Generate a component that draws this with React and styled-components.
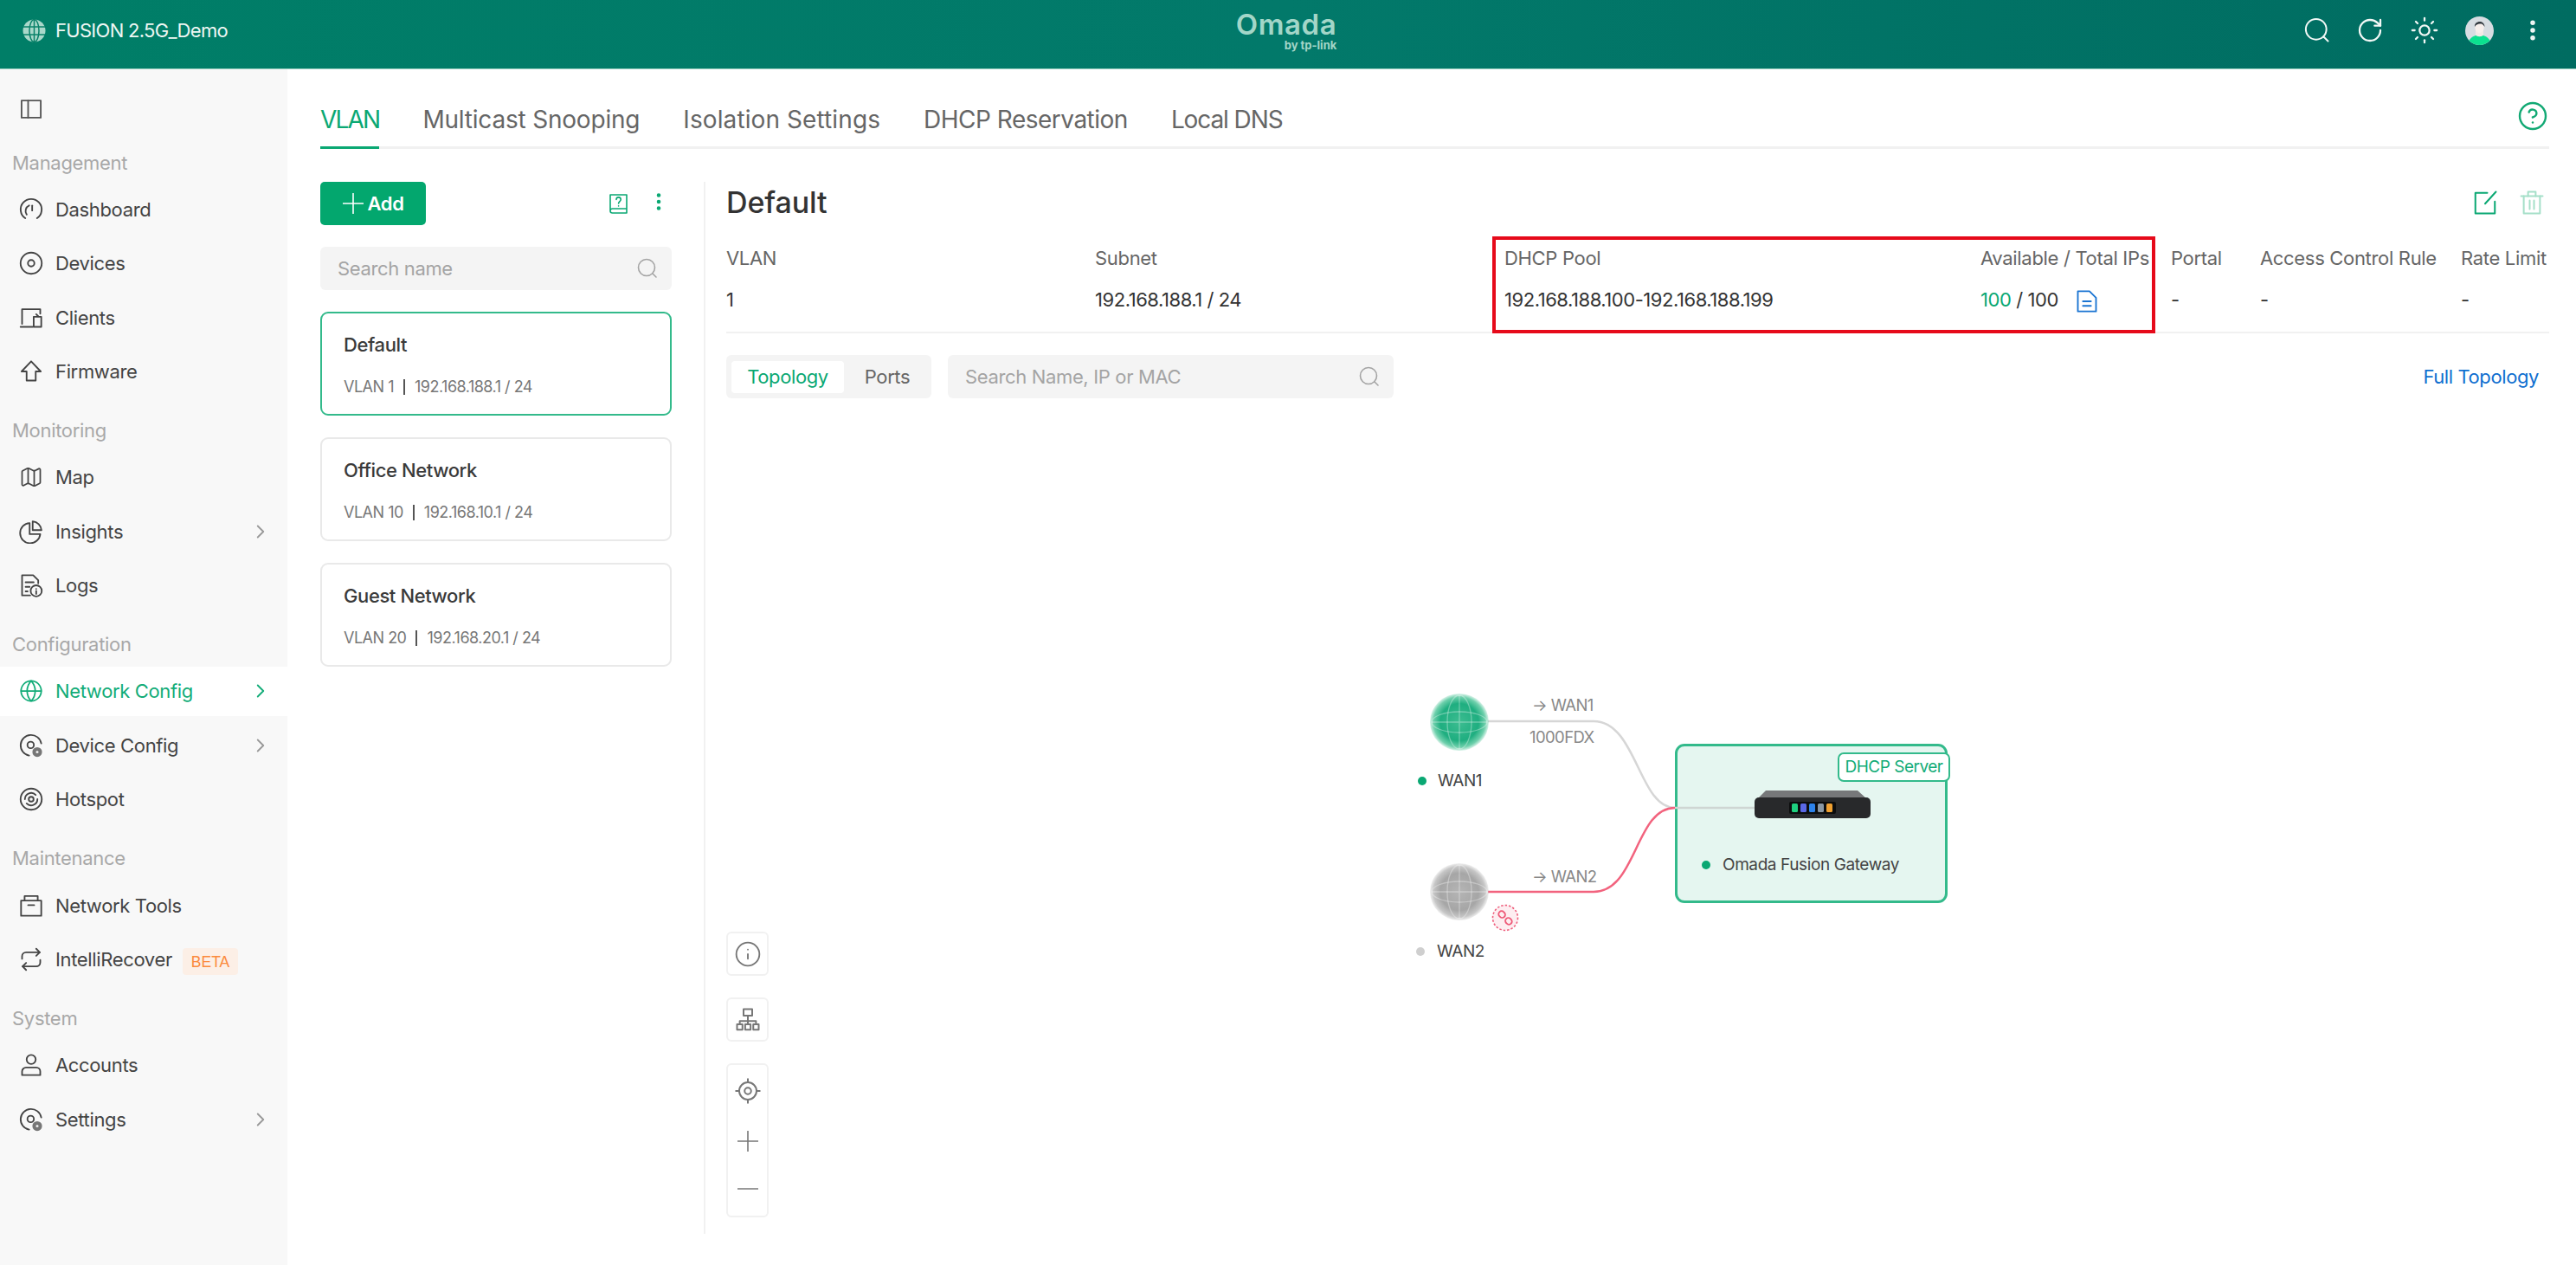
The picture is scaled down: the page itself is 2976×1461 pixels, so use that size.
import React from 'react';
import styled, { createGlobalStyle } from 'styled-components';
import { ChevronRight, Map as MapIcon, Info, Globe, RotateCw, Sun, CircleHelp, EllipsisVertical } from 'lucide-react';

const GlobalStyle = createGlobalStyle`
	html, body {
		margin: 0;
		padding: 0;
		background: #fff;
		font-family: Inter, "Noto Sans", "Liberation Sans", sans-serif;
		color: #333;
		overflow: hidden;
	}
	* { box-sizing: border-box; }
`;

const Page = styled.div`
	display: flex;
	flex-direction: column;
	width: 2976px;
	height: 1461px;
`;

/* top bar */
const Header = styled.header`
	display: grid;
	grid-template-columns: 1fr auto 1fr;
	align-items: center;
	height: 80px;
	flex: none;
	padding: 0 35px 9px 26px;
	border-bottom: 1px solid #8cc8b8;
	background: linear-gradient(90deg, #007e67, #02796a 50%, #006c61);
`;

const SiteName = styled.div`
	display: flex;
	align-items: center;
	gap: 11px;
	font-size: 22px;
	letter-spacing: -0.7px;
	color: #eef7f4;
`;

const Logo = styled.div`
	display: flex;
	flex-direction: column;
	align-items: flex-end;
	margin-left: 5px;
	color: #a3d6c8;
`;

const LogoName = styled.span`
	font-size: 33px;
	line-height: 33px;
	font-weight: 600;
	letter-spacing: 0.6px;
`;

const LogoBy = styled.span`
	font-size: 13px;
	line-height: 14px;
	font-weight: 700;
`;

const HeaderTools = styled.div`
	display: flex;
	align-items: center;
	justify-content: flex-end;
	gap: 30px;
	color: #f2f8f6;
`;

const Body = styled.div`
	display: flex;
	flex: 1;
	min-height: 0;
`;

/* sidebar */
const Sidebar = styled.nav`
	width: 332px;
	flex: none;
	background: #f8f8f8;
	display: flex;
	flex-direction: column;
	gap: 19.5px;
`;

const CollapseRow = styled.div`
	display: flex;
	align-items: center;
	height: 62px;
	margin-top: 15px;
	margin-bottom: -9px;
	padding-left: 22px;
	color: #555;
`;

const Section = styled.section`
	display: flex;
	flex-direction: column;
	gap: 5.3px;
`;

const SectionLabel = styled.div`
	height: 40px;
	margin-bottom: 0.7px;
	padding-left: 14px;
	line-height: 40px;
	font-size: 22px;
	letter-spacing: -0.3px;
	color: #a8a8a8;
`;

const NavItem = styled.div`
	display: flex;
	align-items: center;
	gap: 14px;
	height: 57px;
	padding-left: 22px;
	padding-right: 18px;
	font-size: 22px;
	letter-spacing: -0.35px;
	background: ${(props) => (props.$active ? '#fff' : 'transparent')};
	color: ${(props) => (props.$active ? '#12ac78' : '#444')};
`;

const NavArrow = styled.span`
	display: flex;
	margin-left: auto;
	color: ${(props) => (props.$active ? '#12ac78' : '#999')};
`;

const BetaTag = styled.span`
	margin: 6px 0 0 -2px;
	padding: 0 10px;
	height: 31px;
	line-height: 32px;
	border-radius: 4px;
	background: #fcefe6;
	color: #fb8a3c;
	font-family: "Liberation Sans", sans-serif;
	font-size: 17.5px;
	letter-spacing: 0;
`;

const Glyph = styled.svg`
	display: block;
	flex: none;
	fill: none;
	stroke: currentColor;
	stroke-width: 1.6;
	stroke-linecap: round;
	stroke-linejoin: round;
`;

/* main column */
const Main = styled.main`
	flex: 1;
	min-width: 0;
	padding: 0 31px 36px 38px;
	display: flex;
	flex-direction: column;
`;

const TabBar = styled.div`
	display: flex;
	align-items: flex-end;
	gap: 50px;
	height: 92px;
	flex: none;
	border-bottom: 3px solid #f1f1f1;
	color: #12a974;
`;

const Tab = styled.div`
	height: 51px;
	margin-bottom: -3px;
	padding-bottom: 14px;
	line-height: 34px;
	font-size: 28px;
	letter-spacing: ${(props) => props.$spacing}px;
	border-bottom: 3px solid ${(props) => (props.$active ? '#0aa873' : 'transparent')};
	color: ${(props) => (props.$active ? '#0aa873' : '#666')};
`;

const TabHelp = styled.div`
	margin: 0 1px 13px auto;
`;

const Columns = styled.div`
	display: flex;
	flex: 1;
	min-height: 0;
	margin-top: 38px;
`;

const VlanList = styled.aside`
	width: 406px;
	flex: none;
	display: flex;
	flex-direction: column;
`;

const ListTools = styled.div`
	display: flex;
	align-items: center;
	height: 50px;
	margin-bottom: 25px;
	color: #0aa873;
`;

const AddButton = styled.div`
	display: flex;
	align-items: center;
	justify-content: center;
	gap: 5px;
	width: 122px;
	height: 50px;
	border-radius: 5px;
	background: #03a76e;
	color: #fff;
	font-size: 22px;
	font-weight: 600;
	letter-spacing: -0.4px;
`;

const HelpBook = styled.div`
	margin-left: auto;
	margin-right: 21px;
`;

const DotsButton = styled.div`
	margin-right: 2px;
`;

const SearchBox = styled.div`
	display: flex;
	align-items: center;
	justify-content: space-between;
	width: ${(props) => props.$width || 'auto'};
	height: 50px;
	padding: 0 16px 0 20px;
	border-radius: 6px;
	background: #f4f4f4;
	color: #a4a4a4;
	font-size: 22px;
	letter-spacing: -0.35px;
`;

const VlanCard = styled.div`
	height: 120px;
	margin-top: 25px;
	padding: 21px 25px 0 25px;
	border-radius: 9px;
	border: 2px solid ${(props) => (props.$active ? '#33ba8b' : '#e9e9e9')};
	background: #fff;
`;

const CardName = styled.div`
	line-height: 30px;
	font-size: 22px;
	font-weight: 550;
	letter-spacing: -0.4px;
	color: #3a3a3a;
`;

const CardMeta = styled.div`
	display: flex;
	align-items: center;
	gap: 11px;
	margin-top: 19px;
	line-height: 30px;
	font-size: 18px;
	letter-spacing: -0.5px;
	color: #777;
`;

const MetaBar = styled.span`
	width: 2px;
	height: 18px;
	background: #555;
`;

const Detail = styled.section`
	flex: 1;
	min-width: 0;
	margin-left: 37px;
	padding-left: 24px;
	border-left: 2px solid #f1f1f1;
	display: flex;
	flex-direction: column;
`;

const TitleRow = styled.div`
	display: flex;
	align-items: center;
	justify-content: space-between;
	height: 48px;
	flex: none;
	margin-bottom: 15px;
`;

const Title = styled.h2`
	margin: 0;
	font-size: 34px;
	line-height: 48px;
	font-weight: 450;
	letter-spacing: -0.1px;
	color: #333;
`;

const TitleTools = styled.div`
	display: flex;
	gap: 24px;
	padding-right: 5px;
`;

const ToolIcon = styled.span`
	display: flex;
	color: ${(props) => (props.$muted ? '#a6e0c9' : '#0aa873')};
`;

/* pool table */
const InfoTable = styled.div`
	position: relative;
	display: grid;
	grid-template-columns: 426px 473px 550px 220px 103px 232px 102px;
	grid-template-rows: 50px 46px;
	height: 112px;
	flex: none;
	border-bottom: 2px solid #f1f1f1;
	align-items: center;
`;

const ColHead = styled.div`
	font-size: 22px;
	letter-spacing: -0.32px;
	color: #666;
	white-space: nowrap;
`;

const ColValue = styled.div`
	display: flex;
	align-items: center;
	font-size: 22px;
	letter-spacing: -0.45px;
	color: #333;
	white-space: nowrap;
`;

const Available = styled.span`
	color: #0aa873;
	margin-right: 6px;
`;

const PoolFile = styled.span`
	display: flex;
	margin-left: 19px;
	margin-top: 3px;
	color: #1a74d2;
`;

const Highlight = styled.div`
	position: absolute;
	left: 885px;
	top: 0;
	width: 766px;
	height: 112px;
	border: 4px solid #e60a1a;
	pointer-events: none;
`;

const ViewRow = styled.div`
	display: flex;
	align-items: center;
	height: 50px;
	flex: none;
	margin-top: 25px;
	gap: 19px;
`;

const Segment = styled.div`
	display: flex;
	align-items: center;
	width: 237px;
	height: 50px;
	padding-left: 6px;
	border-radius: 6px;
	background: #f4f4f4;
`;

const SegmentItem = styled.div`
	flex: none;
	width: ${(props) => (props.$active ? '130px' : '100px')};
	height: 37px;
	line-height: 37px;
	text-align: center;
	border-radius: 4px;
	font-size: 22px;
	letter-spacing: -0.4px;
	background: ${(props) => (props.$active ? '#fff' : 'transparent')};
	color: ${(props) => (props.$active ? '#0aa873' : '#666')};
`;

const FullLink = styled.div`
	margin-left: auto;
	padding-right: 12px;
	font-size: 22px;
	letter-spacing: -0.4px;
	color: #0f6fd0;
`;

/* topology canvas */
const Canvas = styled.div`
	position: relative;
	flex: 1;
	min-height: 0;
`;

const Wires = styled.svg`
	position: absolute;
	left: 0;
	top: 0;
	width: 100%;
	height: 100%;
	fill: none;
`;

const Node = styled.div`
	position: absolute;
	left: ${(props) => props.$x}px;
	top: ${(props) => props.$y}px;
`;

const NodeLabel = styled(Node)`
	display: flex;
	align-items: center;
	gap: ${(props) => props.$gap || 11}px;
	height: 26px;
	line-height: 26px;
	font-size: 19px;
	letter-spacing: -0.4px;
	white-space: nowrap;
	color: #444;
`;

const WireLabel = styled(Node)`
	height: 24px;
	line-height: 24px;
	font-size: 18.5px;
	letter-spacing: -0.6px;
	white-space: nowrap;
	color: #888;
`;

const StatusDot = styled.span`
	width: 10px;
	height: 10px;
	border-radius: 50%;
	background: ${(props) => (props.$on ? '#0aa873' : '#cfcfcf')};
`;

const GatewayBox = styled(Node)`
	width: 315px;
	height: 184px;
	border: 3px solid #33ba8b;
	border-radius: 11px;
	background: #e5f6f0;
`;

const ServerTag = styled(Node)`
	width: 130px;
	height: 34px;
	line-height: 29px;
	text-align: center;
	border: 2px solid #33ba8b;
	border-radius: 7px;
	background: #fff;
	color: #12ac78;
	font-size: 19px;
	letter-spacing: -0.5px;
	white-space: nowrap;
`;

const MapControls = styled.div`
	position: absolute;
	left: 0;
	bottom: 19px;
	display: flex;
	flex-direction: column;
	gap: 25px;
`;

const ControlBox = styled.div`
	display: flex;
	flex-direction: column;
	align-items: center;
	justify-content: ${(props) => (props.$tall ? 'space-between' : 'center')};
	width: 49px;
	padding: ${(props) => (props.$tall ? '15px 0 19px' : '0')};
	height: ${(props) => (props.$tall ? '178px' : '51px')};
	border: 2px solid #f1f1f1;
	border-radius: 6px;
	background: #fff;
	color: #777;
`;

const icons = {
	panel: (
		<>
			<rect x="2.5" y="3.5" width="19" height="17" />
			<path d="M9 3.5v17" />
		</>
	),
	dashboard: (
		<>
			<path d="M6.2 20.6A10.4 10.4 0 1 1 17.8 20.6" />
			<path d="M7.6 17a6 6 0 0 1 2.4-9" />
			<path d="M13 8v5" />
		</>
	),
	devices: (
		<>
			<circle cx="12" cy="12" r="10.5" />
			<circle cx="12" cy="12" r="3.2" />
		</>
	),
	clients: (
		<>
			<path d="M3 18V3.5h18V8" />
			<path d="M1.5 21h12" />
			<rect x="14.5" y="11" width="7.5" height="10" />
			<path d="M17 8.5l2 2" />
		</>
	),
	firmware: <path d="M12 2l9.5 10H16.5v9h-9v-9H2.5z" />,
	insights: (
		<>
			<path d="M10.5 3.5A10 10 0 1 0 21 14.5H10.5z" />
			<path d="M13.5 1.8A9.5 9.5 0 0 1 22.2 10.5H13.5z" />
		</>
	),
	logs: (
		<>
			<path d="M11 22H3V2h11l5 5v3" />
			<path d="M6.5 9h8M6.5 13.5h4M6.5 18h2" />
			<circle cx="17" cy="17.5" r="5.5" />
			<path d="M17 15.5v0M17 17.5v3" />
		</>
	),
	gear: (
		<>
			<path d="M10 22A10.3 10.3 0 1 1 22 10" />
			<circle cx="11.5" cy="11.5" r="3.2" />
			<circle cx="18" cy="18.5" r="4" fill="#777" stroke="#777" />
			<circle cx="18" cy="18.5" r="1.3" fill="#eee" stroke="none" />
		</>
	),
	hotspot: (
		<>
			<circle cx="12" cy="12" r="10.5" />
			<path d="M5.8 12A6.2 6.2 0 0 1 16.5 7.8" />
			<path d="M18.2 12A6.2 6.2 0 0 1 7.5 16.2" />
			<circle cx="12" cy="12" r="2.4" />
		</>
	),
	tools: (
		<>
			<rect x="2" y="7" width="20" height="15" />
			<path d="M5.5 7V2.5h13V7" />
			<path d="M9 11.5h6" />
		</>
	),
	repeat: (
		<>
			<path d="M17 1.5l3.5 3.5L17 8.5" />
			<path d="M3 11.5V9a4 4 0 0 1 4-4h13.5" />
			<path d="M7 22.5L3.5 19 7 15.5" />
			<path d="M21 12.5V15a4 4 0 0 1-4 4H3.5" />
		</>
	),
	account: (
		<>
			<circle cx="12" cy="6.5" r="4.5" />
			<path d="M3 22v-3.5a4 4 0 0 1 4-4h10a4 4 0 0 1 4 4V22z" />
		</>
	),
	search: (
		<>
			<circle cx="11" cy="11" r="9.5" />
			<path d="M18 18l4 4" />
		</>
	),
	book: (
		<>
			<path d="M2 20V2h19v21H4.5A2.5 2.5 0 0 1 2 20.5 2.5 2.5 0 0 1 4.5 18H21" />
			<path d="M9 7.5A2.6 2.6 0 0 1 14.2 7.5c0 2-2.6 2.2-2.6 4.5" />
			<path d="M11.6 14.8v.2" />
		</>
	),
	edit: (
		<>
			<path d="M14 3H3v19h18V11" />
			<path d="M12 13L22 2" />
		</>
	),
	trash: (
		<>
			<path d="M2 6h20" />
			<path d="M8.5 6V2h7v4" />
			<path d="M4.5 6v16h15V6" />
			<path d="M10 10v8M14 10v8" />
		</>
	),
	file: (
		<>
			<path d="M3 2h11.5L21 8.5V22H3z" />
			<path d="M8 12h8M8 16.5h8" />
		</>
	),
	tree: (
		<>
			<rect x="8" y="2" width="8" height="6" />
			<path d="M12 8v5M4.5 16v-3h15v3M12 13v3" />
			<rect x="2" y="16" width="5" height="5" />
			<rect x="9.5" y="16" width="5" height="5" />
			<rect x="17" y="16" width="5" height="5" />
		</>
	),
	target: (
		<>
			<circle cx="12" cy="12" r="8" />
			<circle cx="12" cy="12" r="3" />
			<path d="M12 1v3M12 20v3M1 12h3M20 12h3" />
		</>
	),
	plus: <path d="M12 0.5v23M0.5 12h23" />,
	minus: <path d="M0.5 12h23" />,
};

const Icon = ({ name, size = 28, weight }) => (
	<Glyph width={size} height={size} viewBox="0 0 24 24" style={weight ? { strokeWidth: weight } : undefined}>
		{icons[name]}
	</Glyph>
);

const SiteGlobe = () => (
	<svg width="27" height="27" viewBox="0 0 27 27" fill="none">
		<circle cx="13.5" cy="13.5" r="13" fill="#a9d8ca" />
		<g stroke="#0a8169" strokeWidth="1.5">
			<ellipse cx="13.5" cy="13.5" rx="5.5" ry="13" />
			<path d="M13.5 0.5v26M1 9h25M1 18h25" />
		</g>
	</svg>
);

const Avatar = () => (
	<svg width="33" height="33" viewBox="0 0 33 33">
		<defs>
			<clipPath id="avatarClip">
				<circle cx="16.5" cy="16.5" r="16.5" />
			</clipPath>
		</defs>
		<g clipPath="url(#avatarClip)">
			<rect width="33" height="33" fill="#d7dde2" />
			<path d="M3 33c1-8 6-10 9-11h9c3 1 8 3 9 11z" fill="#0be08f" />
			<path d="M12 21c1 3 8 3 9 0v-6h-9z" fill="#f3e9e6" />
			<ellipse cx="16.5" cy="12.5" rx="5.2" ry="6.5" fill="#f7efec" />
			<path d="M11 12c-1-7 11-9 11.5 0-2-3-3-3.5-5.5-3.5S12 10 11 12z" fill="#333a40" />
		</g>
	</svg>
);

const NetworkGlobe = ({ id, stops }) => (
	<svg width="70" height="66" viewBox="0 0 70 66">
		<defs>
			<radialGradient id={id} cx="50%" cy="50%" r="50%">
				<stop offset="0%" stopColor={stops[0]} />
				<stop offset="65%" stopColor={stops[1]} />
				<stop offset="88%" stopColor={stops[2]} />
				<stop offset="100%" stopColor={stops[2]} stopOpacity="0.25" />
			</radialGradient>
		</defs>
		<ellipse cx="35" cy="33" rx="34" ry="33" fill={`url(#${id})`} />
		<g fill="none" stroke="#fff" strokeOpacity="0.32" strokeWidth="1.3">
			<ellipse cx="35" cy="33" rx="14" ry="31" />
			<ellipse cx="35" cy="33" rx="32" ry="12" />
			<path d="M35 2v62M3 33h64" />
		</g>
	</svg>
);

const GatewayDevice = () => (
	<svg width="134" height="34" viewBox="0 0 134 34">
		<path d="M13 0h106l10 9H4z" fill="#77787a" />
		<rect x="0" y="8" width="134" height="24" rx="5" fill="#28292b" />
		<rect x="40" y="13" width="54" height="14" rx="2" fill="#0c0d0e" />
		<rect x="43" y="15" width="7" height="10" rx="1.5" fill="#1ed07f" />
		<rect x="53" y="15" width="7" height="10" rx="1.5" fill="#5a68e6" />
		<rect x="63" y="15" width="7" height="10" rx="1.5" fill="#2d82ea" />
		<rect x="73" y="15" width="7" height="10" rx="1.5" fill="#8a97a3" />
		<rect x="83" y="15" width="7" height="10" rx="1.5" fill="#f0a030" />
	</svg>
);

const LinkDown = () => (
	<svg width="32" height="32" viewBox="0 0 32 32" fill="none">
		<circle cx="16" cy="16" r="14.5" fill="#fdeef1" stroke="#ef5f7d" strokeWidth="1.6" strokeDasharray="2.5 2" />
		<g stroke="#ee5b79" strokeWidth="1.8" transform="rotate(45 16 16)">
			<rect x="6.5" y="12.5" width="8" height="7" rx="3.5" />
			<rect x="17.5" y="12.5" width="8" height="7" rx="3.5" />
		</g>
	</svg>
);

const navSections = [
	{
		label: 'Management',
		items: [
			{ name: 'Dashboard', icon: 'dashboard' },
			{ name: 'Devices', icon: 'devices' },
			{ name: 'Clients', icon: 'clients' },
			{ name: 'Firmware', icon: 'firmware' },
		],
	},
	{
		label: 'Monitoring',
		items: [
			{ name: 'Map', lucide: MapIcon },
			{ name: 'Insights', icon: 'insights', arrow: true },
			{ name: 'Logs', icon: 'logs' },
		],
	},
	{
		label: 'Configuration',
		items: [
			{ name: 'Network Config', lucide: Globe, arrow: true, active: true },
			{ name: 'Device Config', icon: 'gear', arrow: true },
			{ name: 'Hotspot', icon: 'hotspot' },
		],
	},
	{
		label: 'Maintenance',
		items: [
			{ name: 'Network Tools', icon: 'tools' },
			{ name: 'IntelliRecover', icon: 'repeat', beta: true },
		],
	},
	{
		label: 'System',
		items: [
			{ name: 'Accounts', icon: 'account' },
			{ name: 'Settings', icon: 'gear', arrow: true },
		],
	},
];

const tabs = [
	{ label: 'VLAN', spacing: -1.8 },
	{ label: 'Multicast Snooping', spacing: -0.2 },
	{ label: 'Isolation Settings', spacing: 0.1 },
	{ label: 'DHCP Reservation', spacing: -0.5 },
	{ label: 'Local DNS', spacing: -1.1 },
];

const vlans = [
	{ name: 'Default', id: 'VLAN 1', subnet: '192.168.188.1 / 24', active: true },
	{ name: 'Office Network', id: 'VLAN 10', subnet: '192.168.10.1 / 24' },
	{ name: 'Guest Network', id: 'VLAN 20', subnet: '192.168.20.1 / 24' },
];

const columns = ['VLAN', 'Subnet', 'DHCP Pool', 'Available / Total IPs', 'Portal', 'Access Control Rule', 'Rate Limit'];

const App = () => {
	return (
		<Page>
			<GlobalStyle />
			<Header>
				<SiteName>
					<SiteGlobe />
					FUSION 2.5G_Demo
				</SiteName>
				<Logo>
					<LogoName>Omada</LogoName>
					<LogoBy>by tp-link</LogoBy>
				</Logo>
				<HeaderTools>
					<Icon name="search" size={30} />
					<RotateCw size={32} strokeWidth={1.7} />
					<Sun size={34} strokeWidth={1.6} />
					<Avatar />
					<EllipsisVertical size={30} strokeWidth={2.4} />
				</HeaderTools>
			</Header>
			<Body>
				<Sidebar>
					<CollapseRow>
						<Icon name="panel" />
					</CollapseRow>
					{navSections.map((section) => (
						<Section key={section.label}>
							<SectionLabel>{section.label}</SectionLabel>
							{section.items.map((item) => (
								<NavItem key={item.name} $active={item.active}>
									{item.lucide ? <item.lucide size={28} strokeWidth={1.5} /> : <Icon name={item.icon} />}
									<span>{item.name}</span>
									{item.beta ? <BetaTag>BETA</BetaTag> : null}
									{item.arrow ? (
										<NavArrow $active={item.active}>
											<ChevronRight size={26} strokeWidth={1.7} />
										</NavArrow>
									) : null}
								</NavItem>
							))}
						</Section>
					))}
				</Sidebar>
				<Main>
					<TabBar>
						{tabs.map((tab) => (
							<Tab key={tab.label} $active={tab.label === 'VLAN'} $spacing={tab.spacing}>
								{tab.label}
							</Tab>
						))}
						<TabHelp>
							<CircleHelp size={36} strokeWidth={1.6} />
						</TabHelp>
					</TabBar>
					<Columns>
						<VlanList>
							<ListTools>
								<AddButton>
									<Icon name="plus" size={24} />
									Add
								</AddButton>
								<HelpBook>
									<Icon name="book" size={24} />
								</HelpBook>
								<DotsButton>
									<EllipsisVertical size={26} strokeWidth={2.2} />
								</DotsButton>
							</ListTools>
							<SearchBox>
								Search name
								<Icon name="search" size={24} />
							</SearchBox>
							{vlans.map((vlan) => (
								<VlanCard key={vlan.name} $active={vlan.active}>
									<CardName>{vlan.name}</CardName>
									<CardMeta>
										{vlan.id}
										<MetaBar />
										{vlan.subnet}
									</CardMeta>
								</VlanCard>
							))}
						</VlanList>
						<Detail>
							<TitleRow>
								<Title>Default</Title>
								<TitleTools>
									<ToolIcon>
										<Icon name="edit" size={30} />
									</ToolIcon>
									<ToolIcon $muted>
										<Icon name="trash" size={30} />
									</ToolIcon>
								</TitleTools>
							</TitleRow>
							<InfoTable>
								{columns.map((col) => (
									<ColHead key={col}>{col}</ColHead>
								))}
								<ColValue>1</ColValue>
								<ColValue>192.168.188.1 / 24</ColValue>
								<ColValue>192.168.188.100-192.168.188.199</ColValue>
								<ColValue>
									<Available>100</Available>/ 100
									<PoolFile>
										<Icon name="file" size={28} />
									</PoolFile>
								</ColValue>
								<ColValue>-</ColValue>
								<ColValue>-</ColValue>
								<ColValue>-</ColValue>
								<Highlight />
							</InfoTable>
							<ViewRow>
								<Segment>
									<SegmentItem $active>Topology</SegmentItem>
									<SegmentItem>Ports</SegmentItem>
								</Segment>
								<SearchBox $width="515px">
									Search Name, IP or MAC
									<Icon name="search" size={24} />
								</SearchBox>
								<FullLink>Full Topology</FullLink>
							</ViewRow>
							<Canvas>
								<Wires>
									<path d="M880 373h122c50 0 52 100 94 100h96" stroke="#d6d6d6" strokeWidth="2.5" />
									<path d="M880 570h122c50 0 48 -97 94 -97" stroke="#f2637e" strokeWidth="2.5" />
								</Wires>
								<Node $x={812} $y={341}>
									<NetworkGlobe id="wanUp" stops={['#3dbd91', '#1fae80', '#6fd0ac']} />
								</Node>
								<Node $x={812} $y={537}>
									<NetworkGlobe id="wanDown" stops={['#b5b5b5', '#a6a6a6', '#c6c6c6']} />
								</Node>
								<Node $x={884} $y={584}>
									<LinkDown />
								</Node>
								<NodeLabel $x={799} $y={429} $gap={13}>
									<StatusDot $on />
									WAN1
								</NodeLabel>
								<NodeLabel $x={797} $y={626} $gap={14}>
									<StatusDot />
									WAN2
								</NodeLabel>
								<WireLabel $x={931} $y={342}>→ WAN1</WireLabel>
								<WireLabel $x={928} $y={379}>1000FDX</WireLabel>
								<WireLabel $x={931} $y={540}>→ WAN2</WireLabel>
								<GatewayBox $x={1096} $y={399} />
								<Wires>
									<path d="M1096 473h92" stroke="#cfd6d3" strokeWidth="2.5" />
								</Wires>
								<ServerTag $x={1284} $y={409}>DHCP Server</ServerTag>
								<Node $x={1188} $y={453}>
									<GatewayDevice />
								</Node>
								<NodeLabel $x={1127} $y={526} $gap={14}>
									<StatusDot $on />
									Omada Fusion Gateway
								</NodeLabel>
								<MapControls>
									<ControlBox>
										<Info size={32} strokeWidth={1.4} />
									</ControlBox>
									<ControlBox>
										<Icon name="tree" size={30} />
									</ControlBox>
									<ControlBox $tall>
										<Icon name="target" size={30} />
										<Icon name="plus" size={24} />
										<Icon name="minus" size={24} />
									</ControlBox>
								</MapControls>
							</Canvas>
						</Detail>
					</Columns>
				</Main>
			</Body>
		</Page>
	);
};

export default App;
